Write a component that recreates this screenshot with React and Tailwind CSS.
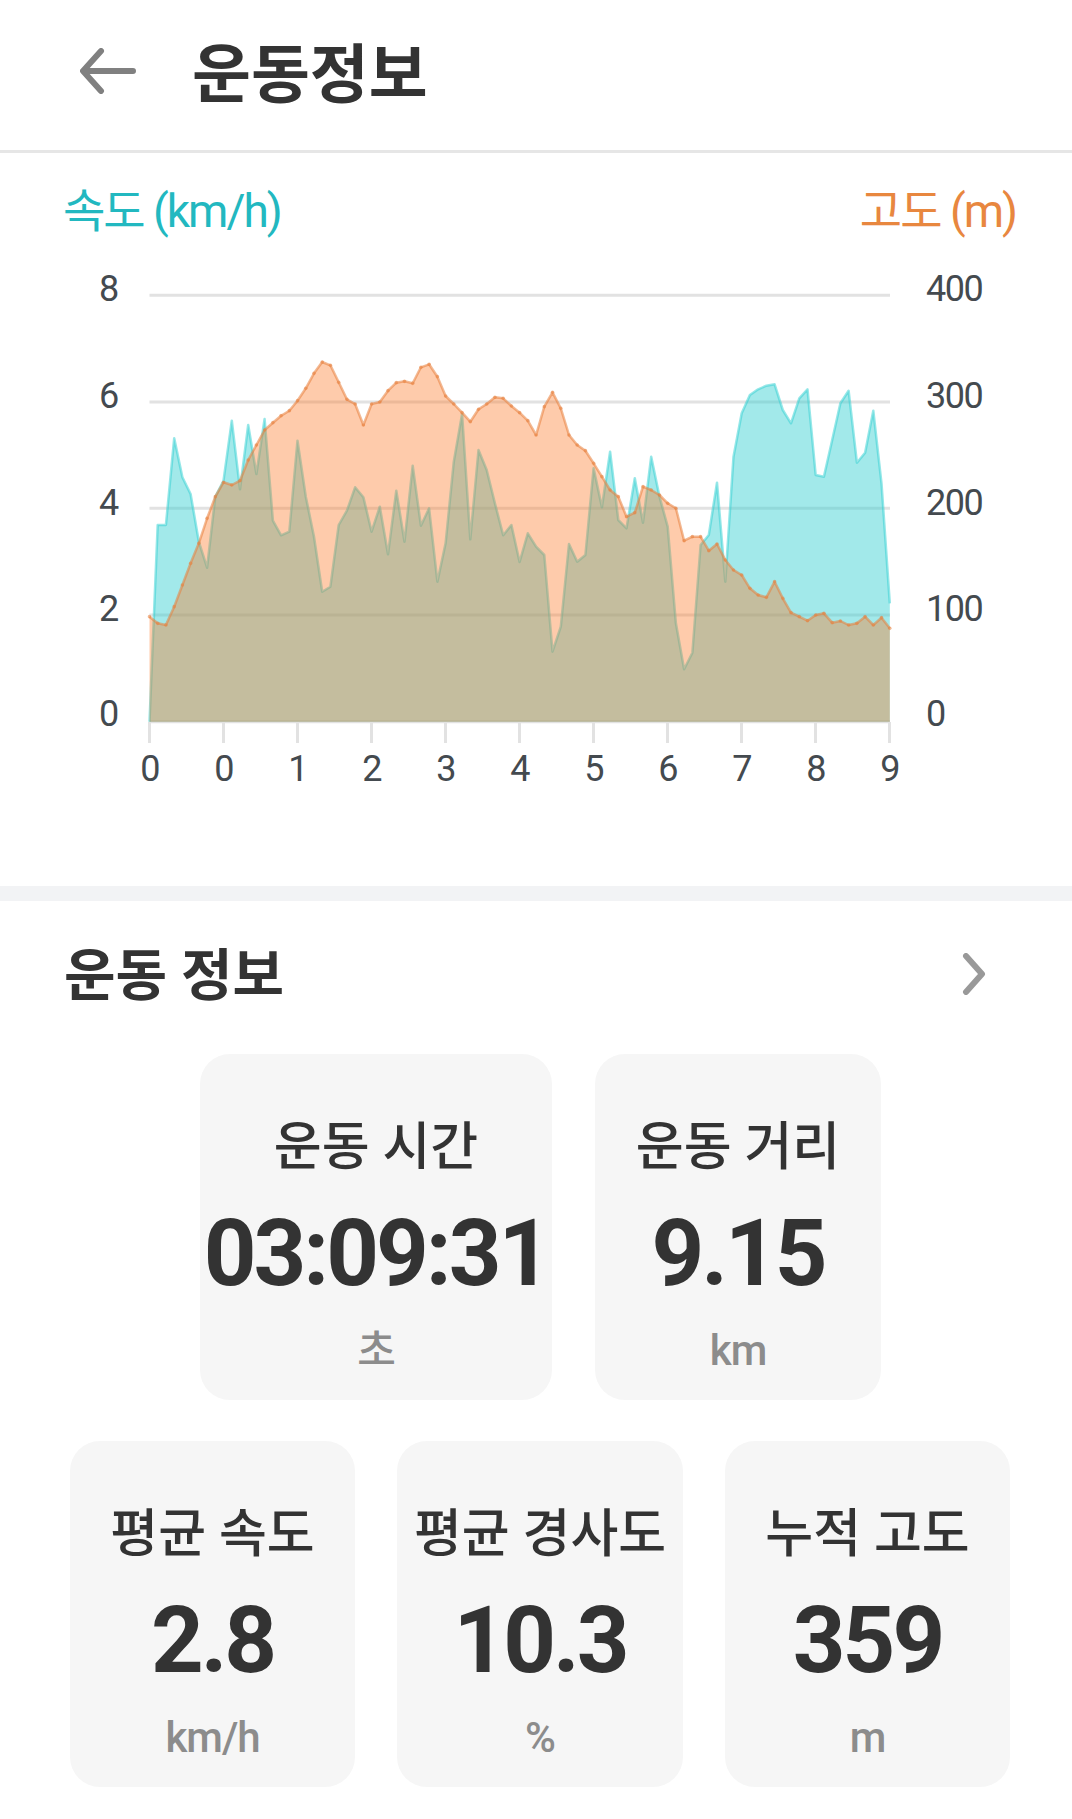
import React from 'react';

const speed = [1355, 765, 765, 505, 622, 672, 815, 893, 680, 632, 452, 658, 465, 612, 447, 752, 796, 785, 512, 680, 800, 965, 950, 765, 722, 652, 682, 785, 710, 853, 662, 815, 587, 767, 715, 935, 820, 575, 432, 808, 540, 600, 700, 796, 765, 876, 790, 830, 855, 1145, 1070, 822, 875, 855, 595, 712, 545, 750, 775, 625, 758, 560, 680, 770, 1060, 1198, 1148, 825, 795, 638, 935, 560, 430, 375, 358, 347, 343, 420, 460, 385, 358, 615, 620, 510, 400, 362, 578, 548, 422, 640, 1000];
const altitude = [1040, 1060, 1065, 1010, 945, 880, 820, 745, 680, 637, 645, 632, 570, 525, 480, 458, 437, 422, 392, 355, 310, 276, 286, 337, 388, 402, 465, 402, 396, 362, 338, 334, 340, 292, 283, 320, 378, 402, 428, 455, 418, 402, 382, 385, 408, 428, 452, 495, 410, 367, 415, 495, 525, 542, 580, 620, 660, 680, 740, 728, 650, 660, 675, 700, 715, 812, 800, 800, 842, 822, 870, 900, 915, 955, 975, 982, 935, 985, 1028, 1040, 1052, 1035, 1030, 1058, 1053, 1065, 1060, 1040, 1065, 1043, 1075];

const X0 = 149.5;
const STEP = 8.225;
const BASE = 721.7;
const toPoints = (list) => list.map((v, i) => [X0 + i * STEP, 270 + v / 3]);
const line = (pts) => pts.map(([x, y]) => `${x.toFixed(1)},${y.toFixed(1)}`).join(' ');
const area = (pts) => `${X0},${BASE} ${line(pts)} ${pts[pts.length - 1][0].toFixed(1)},${BASE}`;

const speedPts = toPoints(speed);
const altPts = toPoints(altitude);

const gridLines = [295.3, 402, 508.3, 615, 721.7];
const leftLabels = [['8', 287.5], ['6', 395], ['4', 502], ['2', 608], ['0', 713]];
const rightLabels = [['400', 287.5], ['300', 395], ['200', 502], ['100', 608], ['0', 713]];
const bottomLabels = ['0', '0', '1', '2', '3', '4', '5', '6', '7', '8', '9'];

const Chart = () => (
    <svg className="block w-[1072px] h-[625px] font-['Roboto',sans-serif] font-normal tracking-[-1.5px]" viewBox="0 260 1072 625" fill="none">
        {gridLines.map((y) => (
            <line key={y} x1="149.5" x2="890" y1={y} y2={y} stroke="#e2e2e2" strokeWidth="3" />
        ))}
        {bottomLabels.map((label, i) => (
            <g key={i}>
                <line x1={X0 + i * 74} x2={X0 + i * 74} y1="722" y2="743" stroke="#e2e2e2" strokeWidth="3" />
                <text x={X0 + i * 74} y="781" fontSize="36" fill="#444a4f" textAnchor="middle">{label}</text>
            </g>
        ))}
        {leftLabels.map(([label, y]) => (
            <text key={label} x="99" y={y + 13} fontSize="36" fill="#444a4f">{label}</text>
        ))}
        {rightLabels.map(([label, y], i) => (
            <text key={i} x="926" y={y + 13} fontSize="36" fill="#444a4f">{label}</text>
        ))}
        <polygon points={area(speedPts)} fill="#30cfd1" fillOpacity="0.45" />
        <polyline points={line(speedPts)} stroke="#30cfd1" strokeOpacity="0.5" strokeWidth="2.5" strokeLinejoin="round" />
        <polygon points={area(altPts)} fill="#fd7622" fillOpacity="0.38" />
        <polyline points={line(altPts)} stroke="#e8803c" strokeOpacity="0.55" strokeWidth="2.5" strokeLinejoin="round" />
        {altPts.map(([x, y], i) => (
            <circle key={i} cx={x} cy={y} r="1.8" fill="#e8803c" fillOpacity="0.55" />
        ))}
    </svg>
);

const StatCard = ({ label, value, unit, width }) => (
    <div className={`${width} h-[346px] shrink-0 rounded-[30px] bg-[#f6f6f6] pt-[59px] flex flex-col items-center text-center whitespace-nowrap`}>
        <div className="h-[70px] leading-[70px] text-[52px] font-medium text-[#333333]">{label}</div>
        <div className="mt-[16px] h-[110px] leading-[110px] text-[92px] font-bold tracking-[-3px] text-[#333333]">{value}</div>
        <div className="mt-[17px] h-[50px] leading-[50px] text-[42px] font-medium tracking-[-1px] text-[#8c8c8c]">{unit}</div>
    </div>
);

export default function App() {
    return (
        <div className="w-[1072px] h-[1819px] bg-white overflow-hidden font-['Roboto','Noto_Sans_CJK_KR',sans-serif]">
            <header className="h-[153px] border-b-[3px] border-[#e6e6e6] flex items-center pl-[80px] pb-[8px]">
                <svg className="w-[56px] h-[46px]" viewBox="0 0 56 46" fill="none" stroke="#808080" strokeWidth="6" strokeLinecap="round" strokeLinejoin="round">
                    <path d="M53 23H4M21 3 3 23l18 20" />
                </svg>
                <h1 className="ml-[56px] pt-[9px] text-[64px] leading-[80px] font-bold text-[#333333]">운동정보</h1>
            </header>

            <section className="h-[733px]">
                <div className="flex justify-between pl-[63px] pr-[56px] pt-[26px] pb-[17px] text-[46px] leading-[64px] font-normal">
                    <span className="text-[#22b8c0] tracking-[-2px]">속도 (km/h)</span>
                    <span className="text-[#e8873f] tracking-[-2px]">고도 (m)</span>
                </div>
                <Chart />
            </section>

            <div className="h-[15px] bg-[#f2f3f5]" />

            <div className="h-[142px] flex items-center justify-between pl-[64px] pr-[86px]">
                <h2 className="pt-[7px] text-[56px] leading-[70px] font-bold text-[#333333]">운동 정보</h2>
                <svg className="mt-[4px] w-[24px] h-[42px]" viewBox="0 0 24 42" fill="none" stroke="#999999" strokeWidth="6" strokeLinecap="round" strokeLinejoin="round">
                    <path d="M4 3l16 18L4 39" />
                </svg>
            </div>

            <div className="mt-[11px] flex gap-[43px] pl-[200px]">
                <StatCard label="운동 시간" value="03:09:31" unit="초" width="w-[352px]" />
                <StatCard label="운동 거리" value="9.15" unit="km" width="w-[286px]" />
            </div>

            <div className="mt-[41px] flex gap-[42px] pl-[70px]">
                <StatCard label="평균 속도" value="2.8" unit="km/h" width="w-[285px]" />
                <StatCard label="평균 경사도" value="10.3" unit="%" width="w-[286px]" />
                <StatCard label="누적 고도" value="359" unit="m" width="w-[285px]" />
            </div>
        </div>
    );
}
